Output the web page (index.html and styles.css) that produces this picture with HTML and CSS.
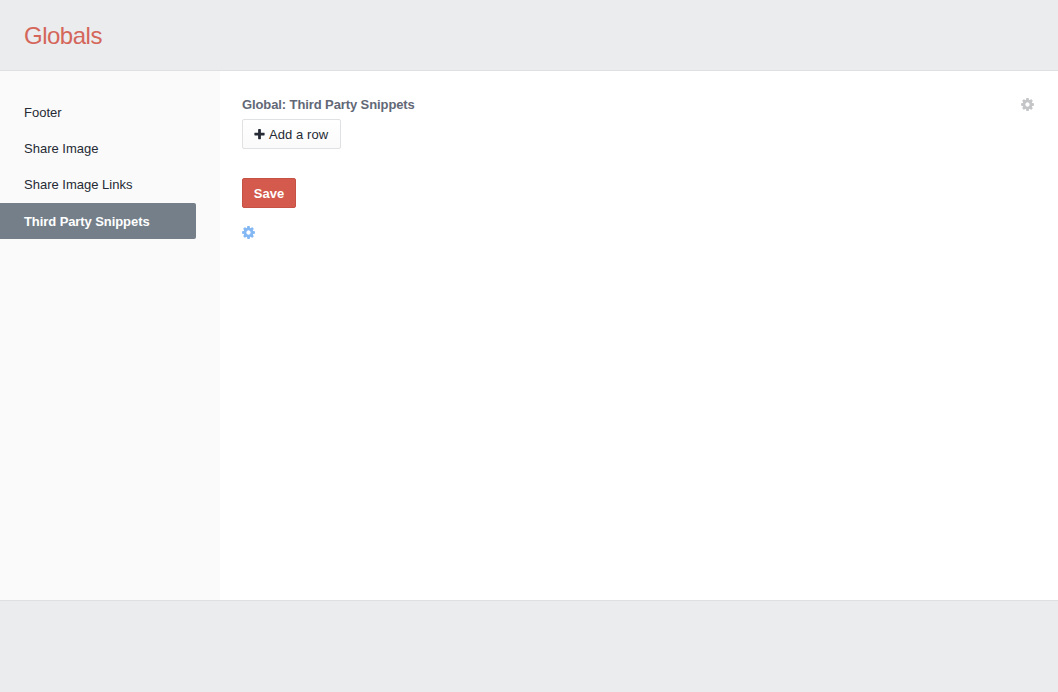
FILE: index.html
```html
<!DOCTYPE html>
<html lang="en">
<head>
<meta charset="utf-8">
<title>Globals</title>
<link rel="stylesheet" href="styles.css">
</head>
<body>
<header class="top"><h1 class="brand">Globals</h1></header>
<div class="middle">
  <nav class="side">
    <a class="side-link" href="#">Footer</a>
    <a class="side-link" href="#">Share Image</a>
    <a class="side-link" href="#">Share Image Links</a>
    <a class="side-link is-active" href="#">Third Party Snippets</a>
  </nav>
  <main class="content">
    <div class="title-row">
      <h2 class="title">Global: Third Party Snippets</h2>
      <svg class="cog cog-grey" viewBox="0 0 1792 1792"><path d="M1152 896q0-106-75-181t-181-75-181 75-75 181 75 181 181 75 181-75 75-181zm512-109v222q0 12-8 23t-20 13l-185 28q-19 54-39 91 35 50 107 138 10 12 10 25t-9 23q-27 37-99 108t-94 71q-12 0-26-9l-138-108q-44 23-91 38-16 136-29 186-7 28-36 28h-222q-14 0-24.500-8.500t-11.500-21.500l-28-184q-49-16-90-37l-141 107q-10 9-25 9-14 0-25-11-126-114-165-168-7-10-7-23 0-12 8-23 15-21 51-66.500t54-70.500q-27-50-41-99l-183-27q-13-2-21-12.500t-8-23.500v-222q0-12 8-23t19-13l186-28q14-46 39-92-40-57-107-138-10-12-10-24 0-10 9-23 26-36 98.500-107.500t94.500-71.500q13 0 26 10l138 107q44-23 91-38 16-136 29-186 7-28 36-28h222q14 0 24.500 8.500t11.500 21.500l28 184q49 16 90 37l142-107q9-9 24-9 13 0 25 10 129 119 165 170 7 8 7 22 0 12-8 23-15 21-51 66.500t-54 70.500q26 50 41 98l183 28q13 2 21 12.500t8 23.500z"/></svg>
    </div>
    <button class="btn btn-add" type="button">
      <svg class="plus" viewBox="0 0 1792 1792"><path d="M1600 736v192q0 40-28 68t-68 28h-416v416q0 40-28 68t-68 28h-192q-40 0-68-28t-28-68v-416h-416q-40 0-68-28t-28-68v-192q0-40 28-68t68-28h416v-416q0-40 28-68t68-28h192q40 0 68 28t28 68v416h416q40 0 68 28t28 68z"/></svg>
      <span class="btn-label">Add a row</span>
    </button>
    <button class="btn btn-save" type="button">Save</button>
    <svg class="cog cog-blue" viewBox="0 0 1792 1792"><path d="M1152 896q0-106-75-181t-181-75-181 75-75 181 75 181 181 75 181-75 75-181zm512-109v222q0 12-8 23t-20 13l-185 28q-19 54-39 91 35 50 107 138 10 12 10 25t-9 23q-27 37-99 108t-94 71q-12 0-26-9l-138-108q-44 23-91 38-16 136-29 186-7 28-36 28h-222q-14 0-24.500-8.500t-11.500-21.500l-28-184q-49-16-90-37l-141 107q-10 9-25 9-14 0-25-11-126-114-165-168-7-10-7-23 0-12 8-23 15-21 51-66.500t54-70.500q-27-50-41-99l-183-27q-13-2-21-12.500t-8-23.500v-222q0-12 8-23t19-13l186-28q14-46 39-92-40-57-107-138-10-12-10-24 0-10 9-23 26-36 98.500-107.500t94.500-71.500q13 0 26 10l138 107q44-23 91-38 16-136 29-186 7-28 36-28h222q14 0 24.500 8.500t11.500 21.500l28 184q49 16 90 37l142-107q9-9 24-9 13 0 25 10 129 119 165 170 7 8 7 22 0 12-8 23-15 21-51 66.500t-54 70.500q26 50 41 98l183 28q13 2 21 12.500t8 23.500z"/></svg>
  </main>
</div>
<footer class="bottom"></footer>
</body>
</html>
```
FILE: styles.css
```css
* { box-sizing: border-box; }
html, body { height: 100%; }
body {
  margin: 0;
  display: flex;
  flex-direction: column;
  height: 692px;
  overflow: hidden;
  font-family: "Liberation Sans", Arial, sans-serif;
  font-size: 13px;
  color: #252a35;
  background: #fff;
}
.top {
  height: 71px;
  flex: none;
  background: #ebecee;
  border-bottom: 1px solid #dfe0e2;
  padding: 1px 24px 0;
  display: flex;
  align-items: center;
}
.brand {
  margin: 0;
  font-size: 24px;
  font-weight: 400;
  letter-spacing: -0.5px;
  color: #d4665a;
}
.middle { height: 529px; flex: none; display: flex; }
.side {
  width: 220px;
  flex: none;
  background: #fafafa;
  padding: 23px 24px 0 0;
  display: flex;
  flex-direction: column;
}
.side-link {
  height: 36px;
  padding-left: 24px;
  display: flex;
  align-items: center;
  color: #252a35;
  text-decoration: none;
}
.side-link.is-active {
  margin-top: 1px;
  background: #747f8a;
  border-radius: 0 2px 2px 0;
  color: #fff;
  font-weight: 700;
  letter-spacing: -0.08px;
}
.content {
  flex: 1;
  padding: 25px 23px 0 22px;
  display: flex;
  flex-direction: column;
  align-items: flex-start;
}
.title-row {
  align-self: stretch;
  display: flex;
  justify-content: space-between;
  align-items: center;
  height: 16px;
}
.title { margin: 0; font-size: 13px; font-weight: 700; letter-spacing: -0.1px; color: #626876; }
.cog { display: block; fill: currentColor; }
.cog-grey { width: 15px; height: 15px; color: #c4c5c7; }
.cog-blue { width: 15px; height: 15px; margin: 17px 0 0 -1px; color: #83b8f5; }
.btn {
  font-family: inherit;
  font-size: 13px;
  border-radius: 2px;
  display: flex;
  align-items: center;
  height: 30px;
  padding: 0;
}
.btn-add {
  margin-top: 7px;
  width: 99px;
  padding-left: 10px;
  gap: 3px;
  background: linear-gradient(#fff, #fafafa);
  border: 1px solid #e0e1e3;
  color: #252a35;
}
.plus { width: 13px; height: 13px; fill: currentColor; }
.btn-label { letter-spacing: 0.08px; }
.btn-save {
  margin-top: 29px;
  width: 54px;
  justify-content: center;
  background: #d35a4c;
  border: 1px solid #c65245;
  color: #fff;
  font-weight: 700;
}
.bottom {
  flex: 1;
  background: #ebecee;
  border-top: 1px solid #dfe0e2;
}
```
